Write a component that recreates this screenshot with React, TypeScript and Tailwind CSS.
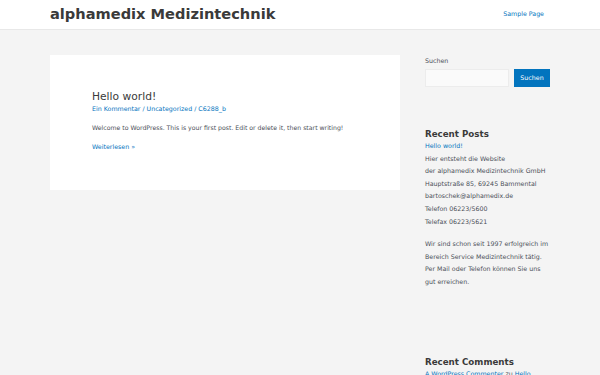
export default function App() {
  const lines = [
    "Hier entsteht die Website",
    "der alphamedix Medizintechnik GmbH",
    "Hauptstraße 85, 69245 Bammental",
    "bartoschek@alphamedix.de",
    "Telefon 06223/5600",
    "Telefax 06223/5621",
  ];
  const more = [
    "Wir sind schon seit 1997 erfolgreich im",
    "Bereich Service Medizintechnik tätig.",
    "Per Mail oder Telefon können Sie uns",
    "gut erreichen.",
  ];
  return (
    <div className="w-[600px] h-[375px] overflow-hidden bg-[#f4f4f4] text-[#3a3a3a] font-['DejaVu_Sans',sans-serif]">
      {/* header */}
      <header className="h-[30px] bg-white border-b border-[#e8e8e8] flex items-center justify-between pl-[50px] pr-[56px]">
        <div className="text-[14.6px] font-bold leading-none text-[#3a3a3a] -mt-[1px]">alphamedix Medizintechnik</div>
        <a className="text-[6.3px] text-[#0274be] -mt-[1px]">Sample Page</a>
      </header>

      <div className="flex pl-[50px] pt-[25px]">
        {/* main */}
        <main className="w-[350px]">
          <article className="bg-white h-[135px] pl-[42px] pt-[35px]">
            <h2 className="text-[10.7px] leading-[14px] text-[#3a3a3a]">Hello world!</h2>
            <div className="text-[6.3px] leading-[8px] text-[#0274be] mt-[1px]">
              Ein Kommentar / Uncategorized / C6288_b
            </div>
            <p className="text-[6.2px] leading-[8px] mt-[11px] text-[#4b4f58]">
              Welcome to WordPress. This is your first post. Edit or delete it, then start writing!
            </p>
            <a className="block text-[6.3px] leading-[8px] text-[#0274be] mt-[11px]">Weiterlesen »</a>
          </article>
        </main>

        {/* sidebar */}
        <aside className="w-[125px] ml-[25px] pt-[1px] text-[6.3px] text-[#4b4f58]">
          <div className="leading-[8px] mt-[1px]">Suchen</div>
          <div className="flex gap-[5px] mt-[4px]">
            <div className="w-[84px] h-[18px] bg-[#fafafa] border border-[#ececec]" />
            <button className="w-[36px] h-[18px] bg-[#0274be] text-white text-[6.3px] leading-none">Suchen</button>
          </div>

          <h3 className="text-[8.7px] font-bold leading-[12px] mt-[41px] text-[#3a3a3a]">Recent Posts</h3>
          <div className="leading-[12.6px]">
            <div className="text-[#0274be]">Hello world!</div>
            {lines.map((l) => (
              <div key={l}>{l}</div>
            ))}
            <div className="h-[10px]" />
            {more.map((l) => (
              <div key={l}>{l}</div>
            ))}
          </div>

          <h3 className="text-[8.7px] font-bold leading-[12px] mt-[67px] text-[#3a3a3a]">Recent Comments</h3>
          <div className="leading-[12px]">
            <span className="text-[#0274be]">A WordPress Commenter</span> zu <span className="text-[#0274be]">Hello</span>
          </div>
        </aside>
      </div>
    </div>
  );
}
